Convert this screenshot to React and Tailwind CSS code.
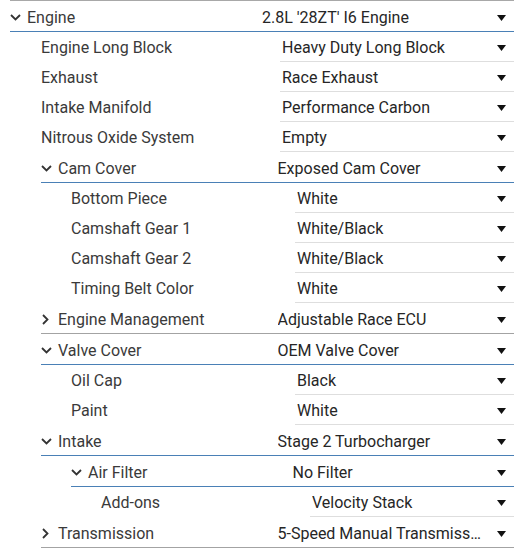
import React from 'react';

const tree = [
  {
    label: 'Engine', value: "2.8L '28ZT' I6 Engine", open: true,
    children: [
      { label: 'Engine Long Block', value: 'Heavy Duty Long Block' },
      { label: 'Exhaust', value: 'Race Exhaust' },
      { label: 'Intake Manifold', value: 'Performance Carbon' },
      { label: 'Nitrous Oxide System', value: 'Empty' },
      {
        label: 'Cam Cover', value: 'Exposed Cam Cover', open: true,
        children: [
          { label: 'Bottom Piece', value: 'White' },
          { label: 'Camshaft Gear 1', value: 'White/Black' },
          { label: 'Camshaft Gear 2', value: 'White/Black' },
          { label: 'Timing Belt Color', value: 'White' },
        ],
      },
      { label: 'Engine Management', value: 'Adjustable Race ECU', open: false, children: [] },
      {
        label: 'Valve Cover', value: 'OEM Valve Cover', open: true,
        children: [
          { label: 'Oil Cap', value: 'Black' },
          { label: 'Paint', value: 'White' },
        ],
      },
      {
        label: 'Intake', value: 'Stage 2 Turbocharger', open: true,
        children: [
          {
            label: 'Air Filter', value: 'No Filter', open: true,
            children: [{ label: 'Add-ons', value: 'Velocity Stack' }],
          },
        ],
      },
      { label: 'Transmission', value: '5-Speed Manual Transmission', open: false, children: [] },
    ],
  },
];

const indents = ['ml-[10px]', 'ml-[41px]', 'ml-[71px]', 'ml-[101px]'];

const Caret = () => (
  <svg width="9" height="6" viewBox="0 0 9 6" className="shrink-0">
    <polygon points="0,0 9,0 4.5,6" fill="#111" />
  </svg>
);

const Chevron = ({ open }) =>
  open ? (
    <svg width="11" height="7" viewBox="0 0 11 7" className="shrink-0">
      <polyline points="1,1 5.5,5.5 10,1" fill="none" stroke="#333" strokeWidth="1.8" />
    </svg>
  ) : (
    <svg width="7" height="11" viewBox="0 0 7 11" className="shrink-0">
      <polyline points="1,1 5.5,5.5 1,10" fill="none" stroke="#333" strokeWidth="1.8" />
    </svg>
  );

function Node({ item, level }) {
  const ml = indents[level];

  if (!item.children) {
    return (
      <div className={`flex h-[30px] ${ml}`}>
        <div className="flex h-[29px] w-1/2 shrink-0 items-center pt-[3px] text-[#3a3a3a]">{item.label}</div>
        <div className="w-1/2 shrink-0 pl-[2px]">
          <div className="flex h-[30px] items-center border-b border-[#dedede] pl-[2.5px] pr-[8px] pt-[3px]">
            <span className="min-w-0 flex-1 truncate text-[#262626]">{item.value}</span>
            <Caret />
          </div>
        </div>
      </div>
    );
  }

  return (
    <>
      <div
        className={`flex h-[31px] items-center border-b pt-[3px] ${ml} ${
          item.open ? 'border-[#4a80b6]' : 'border-[#a3a3a3]'
        }`}
      >
        <div className="flex w-1/2 shrink-0 items-center text-[#3a3a3a]">
          <span className={`flex w-[17px] items-center ${item.open ? 'pl-0' : 'pl-[1px]'}`}>
            <Chevron open={item.open} />
          </span>
          {item.label}
        </div>
        <div className="flex w-1/2 shrink-0 items-center pr-[8px]">
          <span className="min-w-0 flex-1 truncate pr-[14px] text-[#262626]">{item.value}</span>
          <Caret />
        </div>
      </div>
      {item.open && item.children.map((c) => <Node key={c.label} item={c} level={level + 1} />)}
    </>
  );
}

export default function App() {
  return (
    <div
      className="h-[550px] w-[514px] overflow-hidden bg-white text-[16px]"
      style={{ fontFamily: 'Roboto, "Liberation Sans", sans-serif' }}
    >
      <div className="ml-[10px] h-px bg-[#a8a8a8]" />
      {tree.map((n) => (
        <Node key={n.label} item={n} level={0} />
      ))}
    </div>
  );
}
